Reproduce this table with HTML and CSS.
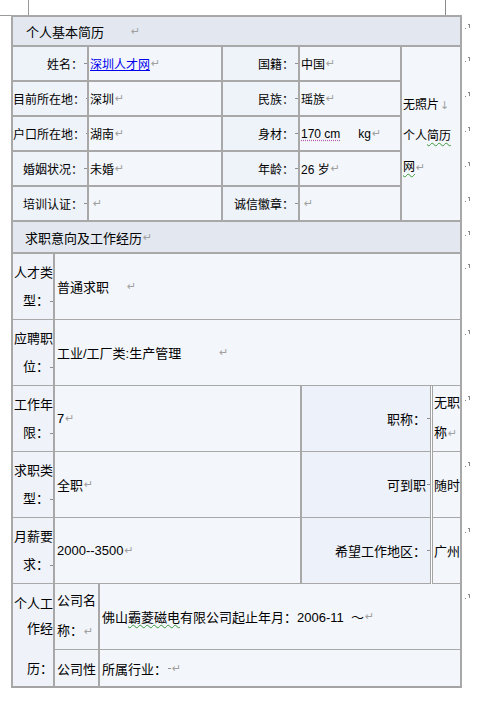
FILE: index.html
```html
<!DOCTYPE html>
<html lang="zh-CN">
<head>
<meta charset="utf-8">
<title>个人基本简历</title>
<link rel="stylesheet" href="styles.css">
</head>
<body>
<div class="page">
  <div class="top-marks"><span class="corner-l"></span><span class="corner-r"></span></div>

  <div class="sec sec-a">
    <div class="c hd span5">个人基本简历<span class="pm hd-gap">↵</span></div>
    <div class="mk mk-hd"><svg width="7" height="6" viewBox="0 0 7 6"><rect x="0" y="4" width="1" height="1"/><rect x="4" y="0" width="1" height="4"/><rect x="3" y="0" width="1" height="1"/></svg></div>

    <div class="c lb first">姓名：<i class="sp"></i></div>
    <div class="c val"><a href="#" class="link">深圳人才网</a><span class="pm">↵</span></div>
    <div class="c lb">国籍：<i class="sp"></i></div>
    <div class="c val">中国<span class="pm">↵</span></div>
    <div class="c photo"><div class="photo-text">无照片<span class="pm">↓</span><br>个人<span class="wavy">简历</span><br><span class="wavy">网</span><span class="pm">↵</span></div></div>
    <div class="mk"><svg width="7" height="6" viewBox="0 0 7 6"><rect x="0" y="4" width="1" height="1"/><rect x="4" y="0" width="1" height="4"/><rect x="3" y="0" width="1" height="1"/></svg></div>

    <div class="c lb first">目前所在地：<i class="sp"></i></div>
    <div class="c val">深圳<span class="pm">↵</span></div>
    <div class="c lb">民族：<i class="sp"></i></div>
    <div class="c val">瑶族<span class="pm">↵</span></div>
    <div class="mk"><svg width="7" height="6" viewBox="0 0 7 6"><rect x="0" y="4" width="1" height="1"/><rect x="4" y="0" width="1" height="4"/><rect x="3" y="0" width="1" height="1"/></svg></div>

    <div class="c lb first">户口所在地：<i class="sp"></i></div>
    <div class="c val">湖南<span class="pm">↵</span></div>
    <div class="c lb">身材：<i class="sp"></i></div>
    <div class="c val"><span class="dotted">170 cm</span><span class="kg">kg</span><span class="pm">↵</span></div>
    <div class="mk"><svg width="7" height="6" viewBox="0 0 7 6"><rect x="0" y="4" width="1" height="1"/><rect x="4" y="0" width="1" height="4"/><rect x="3" y="0" width="1" height="1"/></svg></div>

    <div class="c lb first">婚姻状况：<i class="sp"></i></div>
    <div class="c val">未婚<span class="pm">↵</span></div>
    <div class="c lb">年龄：<i class="sp"></i></div>
    <div class="c val">26&nbsp;岁<span class="pm">↵</span></div>
    <div class="mk"><svg width="7" height="6" viewBox="0 0 7 6"><rect x="0" y="4" width="1" height="1"/><rect x="4" y="0" width="1" height="4"/><rect x="3" y="0" width="1" height="1"/></svg></div>

    <div class="c lb first">培训认证：<i class="sp"></i></div>
    <div class="c val"><span class="pm pm-empty">↵</span></div>
    <div class="c lb">诚信徽章：<i class="sp"></i></div>
    <div class="c val"><span class="pm pm-empty">↵</span></div>
    <div class="mk"><svg width="7" height="6" viewBox="0 0 7 6"><rect x="0" y="4" width="1" height="1"/><rect x="4" y="0" width="1" height="4"/><rect x="3" y="0" width="1" height="1"/></svg></div>
  </div>

  <div class="sec sec-b">
    <div class="c hd hd-b span4">求职意向及工作经历<span class="pm">↵</span></div>
    <div class="mk mk-hd"><svg width="7" height="6" viewBox="0 0 7 6"><rect x="0" y="4" width="1" height="1"/><rect x="4" y="0" width="1" height="4"/><rect x="3" y="0" width="1" height="1"/></svg></div>

    <div class="c lb2 first"><div class="ml">人才类<br>型：<i class="sp"></i></div></div>
    <div class="c v2 span3">普通求职<span class="pm gap-a">↵</span></div>
    <div class="mk"><svg width="7" height="6" viewBox="0 0 7 6"><rect x="0" y="4" width="1" height="1"/><rect x="4" y="0" width="1" height="4"/><rect x="3" y="0" width="1" height="1"/></svg></div>

    <div class="c lb2 first"><div class="ml">应聘职<br>位：<i class="sp"></i></div></div>
    <div class="c v2 span3">工业/工厂类:生产管理<span class="pm gap-b">↵</span></div>
    <div class="mk"><svg width="7" height="6" viewBox="0 0 7 6"><rect x="0" y="4" width="1" height="1"/><rect x="4" y="0" width="1" height="4"/><rect x="3" y="0" width="1" height="1"/></svg></div>

    <div class="c lb2 first"><div class="ml">工作年<br>限：<i class="sp"></i></div></div>
    <div class="c v2">7<span class="pm">↵</span></div>
    <div class="c lb3">职称：<i class="sp"></i></div>
    <div class="c v4"><div class="ml2">无职<br>称<span class="pm">↵</span></div></div>
    <div class="mk"><svg width="7" height="6" viewBox="0 0 7 6"><rect x="0" y="4" width="1" height="1"/><rect x="4" y="0" width="1" height="4"/><rect x="3" y="0" width="1" height="1"/></svg></div>

    <div class="c lb2 first"><div class="ml">求职类<br>型：<i class="sp"></i></div></div>
    <div class="c v2">全职<span class="pm">↵</span></div>
    <div class="c lb3">可到职<i class="sp"></i></div>
    <div class="c v4">随时<i class="sp"></i></div>
    <div class="mk"><svg width="7" height="6" viewBox="0 0 7 6"><rect x="0" y="4" width="1" height="1"/><rect x="4" y="0" width="1" height="4"/><rect x="3" y="0" width="1" height="1"/></svg></div>

    <div class="c lb2 first"><div class="ml">月薪要<br>求：<i class="sp"></i></div></div>
    <div class="c v2">2000--3500<span class="pm">↵</span></div>
    <div class="c lb3">希望工作地区：<i class="sp"></i></div>
    <div class="c v4">广州<i class="sp"></i></div>
    <div class="mk"><svg width="7" height="6" viewBox="0 0 7 6"><rect x="0" y="4" width="1" height="1"/><rect x="4" y="0" width="1" height="4"/><rect x="3" y="0" width="1" height="1"/></svg></div>
  </div>

  <div class="sec sec-c">
    <div class="c lb2 first rs2 bottom"><div class="ml3"><div>个人工</div><div>作经</div><div class="ml3-last">历：</div></div></div>
    <div class="c sub"><div class="ml2">公司名<br>称：<span class="pm">↵</span></div></div>
    <div class="c v3">佛山<span class="wavy">霸菱磁电</span>有限公司起止年月：2006-11&nbsp;&nbsp;～<span class="pm">↵</span></div>
    <div class="mk"><svg width="7" height="6" viewBox="0 0 7 6"><rect x="0" y="4" width="1" height="1"/><rect x="4" y="0" width="1" height="4"/><rect x="3" y="0" width="1" height="1"/></svg></div>
    <div class="c sub bottom">公司性</div>
    <div class="c v3 bottom">所属行业：<i class="sp"></i><span class="pm">↵</span></div>
  </div>
</div>
</body>
</html>
```

FILE: styles.css
```css
* { box-sizing: border-box; }

html, body {
  margin: 0;
  background: #ffffff;
}

body {
  font-family: "Liberation Sans", "Noto Sans CJK SC", sans-serif;
  font-size: 13px;
  color: #000;
}

.page {
  width: 486px;
  height: 705px;
  overflow: hidden;
}

/* page corner marks above the table */
.top-marks {
  display: flex;
  height: 15px;
}
.corner-l {
  width: 29px;
  height: 16px;
  border-right: 1px solid #9a9a9a;
  border-bottom: 1px solid #9a9a9a;
  flex: none;
}
.corner-r {
  margin-left: 416px;
  width: 1px;
  height: 15px;
  background: #8a8a8a;
  flex: none;
}

/* table sections */
.sec {
  display: grid;
  margin-left: 11px;
  width: 475px;
}
.sec-a {
  grid-template-columns: 78px 134px 77px 102px 60px 24px;
  grid-template-rows: 32px repeat(5, 35px);
  font-size: 12px;
}
.sec-b {
  grid-template-columns: 44px 247px 129px 31px 24px;
  grid-template-rows: 32px repeat(5, 66px);
}
.sec-c {
  grid-template-columns: 44px 45px 362px 24px;
  grid-template-rows: 66px 38px;
}

.c {
  display: flex;
  align-items: center;
  white-space: nowrap;
  overflow: hidden;
  background: #f3f6fa;
  border-right: 2px solid #a8a8a8;
  border-bottom: 2px solid #a8a8a8;
}
.sec-b .c,
.sec-c .c {
  border-bottom-width: 1px;
}
.c.first { border-left: 2px solid #a8a8a8; }
.c.bottom { border-bottom: 2px solid #a4a4a4; }

.span5 { grid-column: span 5; }
.span4 { grid-column: span 4; }
.span3 { grid-column: span 3; }
.rs2 { grid-row: span 2; }

/* header bars */
.hd {
  background: #e3e8f0;
  border: 2px solid #a8a8a8;
  padding-left: 13px;
  font-size: 13px;
}
.sec-b .hd.hd-b {
  border-top: 0;
  border-bottom-width: 2px;
  padding-left: 12px;
}

/* section A cells */
.lb {
  justify-content: flex-end;
  background: #eef2f9;
  padding-right: 0;
}
.val {
  padding-left: 1px;
}
.photo {
  grid-column: 5;
  grid-row: 2 / span 5;
  padding-left: 1px;
  background: #f3f6fa;
}
.photo-text {
  line-height: 31px;
  font-size: 12px;
  padding-top: 6px;
}

.link {
  color: #0000ee;
  text-decoration: underline;
}

.dotted {
  text-decoration: underline dotted #b45ab4;
  text-underline-offset: 2px;
}
.kg { margin-left: 18px; }

.wavy {
  text-decoration: underline wavy #3c9a3c;
  text-decoration-thickness: 1px;
  text-underline-offset: 2px;
}

/* section B / C cells */
.lb2 {
  justify-content: flex-end;
  background: #eff2f8;
}
.ml {
  line-height: 28px;
  text-align: right;
}
.v2 {
  padding-left: 2px;
}
.lb3 {
  justify-content: flex-end;
  background: #edf1f9;
  border-right: 1px solid #a4a4a4;
  padding-right: 0;
}
.v4 {
  border-left: 1px solid #a4a4a4;
  margin-left: 1px;
  padding-left: 1px;
}
.ml2 {
  line-height: 30px;
}
.sub {
  background: #f1f4f9;
  padding-left: 2px;
}
.v3 {
  padding-left: 2px;
  border-right: 2px solid #a8a8a8;
}
.ml3 {
  align-self: flex-start;
  padding-top: 7px;
  line-height: 25px;
  text-align: right;
}
.ml3-last { margin-top: 15px; }

/* word-processor formatting marks */
.pm {
  font-family: "DejaVu Sans", sans-serif;
  font-size: 11px;
  color: #a0a0a0;
  margin-left: 1px;
}
.pm.pm-empty { margin-left: 3px; }
.pm.hd-gap { margin-left: 27px; }
.pm.gap-a { margin-left: 18px; }
.pm.gap-b { margin-left: 38px; }

.sp {
  display: inline-block;
  width: 3px;
  height: 1px;
  background: #8f8f8f;
  vertical-align: middle;
  margin-left: 1px;
}

.mk {
  padding: 10px 0 0 3px;
}
.mk svg {
  display: block;
  fill: #8a8a8a;
}
.mk-hd { padding-top: 9px; }
```
